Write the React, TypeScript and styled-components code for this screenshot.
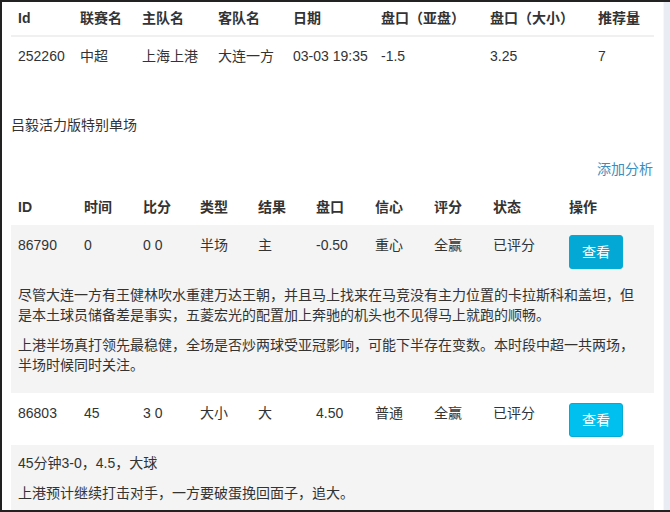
import React from 'react';
import styled, { createGlobalStyle } from 'styled-components';

const GlobalStyle = createGlobalStyle`
  *, *::before, *::after {
    box-sizing: border-box;
  }
  html, body {
    margin: 0;
    padding: 0;
    background: #fff;
  }
  body {
    font-family: "Liberation Sans", "Noto Sans CJK SC", sans-serif;
    font-size: 14px;
    line-height: 20px;
    color: #333;
  }
`;

const Frame = styled.div`
  display: flex;
  height: 100vh;
  border-top: 2px solid #222;
  border-bottom: 2px solid #222;
  border-left: 2px solid #222;
  overflow: hidden;
`;

const Content = styled.div`
  flex: 1;
  min-width: 0;
  padding: 0 9px;
  overflow: hidden;
`;

const ScrollTrack = styled.div`
  width: 7px;
  flex-shrink: 0;
  background: #e9ecf3;
  border-left: 1px solid #f6f7fa;
`;

const Table = styled.table`
  width: 100%;
  table-layout: fixed;
  border-collapse: collapse;
  border-spacing: 0;
`;

const Th = styled.th<{ $w: number; $pad?: string; $line?: boolean }>`
  width: ${({ $w }) => $w}px;
  text-align: left;
  font-weight: bold;
  padding: ${({ $pad }) => $pad || '8px 7px'};
  border-bottom: ${({ $line }) => ($line ? '2px solid #f0f0f0' : 'none')};
  white-space: nowrap;
`;

const Td = styled.td<{ $pad?: string }>`
  padding: ${({ $pad }) => $pad || '10px 7px 8px'};
  vertical-align: top;
  white-space: nowrap;
`;

const Row = styled.tr<{ $grey?: boolean }>`
  background: ${({ $grey }) => ($grey ? '#f4f4f4' : '#fff')};
`;

const DetailCell = styled.td`
  padding: 8px 16px 8px 7px;
  p {
    margin: 0 0 10px;
  }
`;

const Title = styled.div`
  margin-top: 40px;
`;

const LinkRow = styled.div`
  display: flex;
  justify-content: flex-end;
  margin-top: 24px;
  margin-bottom: 10px;
  padding-right: 1px;
`;

const AddLink = styled.a`
  color: #3c8dbc;
  text-decoration: none;
  cursor: pointer;
`;

const ViewButton = styled.button<{ $active?: boolean }>`
  font-family: "Liberation Sans", "Noto Sans CJK SC", sans-serif;
  font-size: 14px;
  line-height: 20px;
  padding: 6px 12px;
  color: #fff;
  background: ${({ $active }) => ($active ? '#03a9d4' : '#00c0ef')};
  border: 1px solid #00acd6;
  border-radius: 3px;
  cursor: pointer;
`;

const topCols: [string, number][] = [
  ['Id', 62],
  ['联赛名', 62],
  ['主队名', 76],
  ['客队名', 75],
  ['日期', 88],
  ['盘口（亚盘）', 109],
  ['盘口（大小）', 108],
  ['推荐量', 63],
];

const topRow = ['252260', '中超', '上海上港', '大连一方', '03-03 19:35', '-1.5', '3.25', '7'];

const cols: [string, number][] = [
  ['ID', 66],
  ['时间', 59],
  ['比分', 57],
  ['类型', 58],
  ['结果', 58],
  ['盘口', 59],
  ['信心', 59],
  ['评分', 59],
  ['状态', 76],
  ['操作', 92],
];

interface Analysis {
  cells: string[];
  notes: string[];
}

const analyses: Analysis[] = [
  {
    cells: ['86790', '0', '0 0', '半场', '主', '-0.50', '重心', '全赢', '已评分'],
    notes: [
      '尽管大连一方有王健林吹水重建万达王朝，并且马上找来在马竞没有主力位置的卡拉斯科和盖坦，但是本土球员储备差是事实，五菱宏光的配置加上奔驰的机头也不见得马上就跑的顺畅。',
      '上港半场真打领先最稳健，全场是否炒两球受亚冠影响，可能下半存在变数。本时段中超一共两场，半场时候同时关注。',
    ],
  },
  {
    cells: ['86803', '45', '3 0', '大小', '大', '4.50', '普通', '全赢', '已评分'],
    notes: ['45分钟3-0，4.5，大球', '上港预计继续打击对手，一方要破蛋挽回面子，追大。'],
  },
];

export default function App() {
  return (
    <>
      <GlobalStyle />
      <Frame>
        <Content>
          <Table>
            <thead>
              <tr>
                {topCols.map(([label, w]) => (
                  <Th key={label} $w={w} $pad="6px 7px 7px" $line>
                    {label}
                  </Th>
                ))}
              </tr>
            </thead>
            <tbody>
              <tr>
                {topRow.map((v, i) => (
                  <Td key={i} $pad="9px 7px">
                    {v}
                  </Td>
                ))}
              </tr>
            </tbody>
          </Table>

          <Title>吕毅活力版特别单场</Title>
          <LinkRow>
            <AddLink>添加分析</AddLink>
          </LinkRow>

          <Table>
            <thead>
              <tr>
                {cols.map(([label, w]) => (
                  <Th key={label} $w={w}>
                    {label}
                  </Th>
                ))}
              </tr>
            </thead>
            <tbody>
              {analyses.map((a, idx) => (
                <React.Fragment key={a.cells[0]}>
                  <Row $grey={idx % 2 === 0}>
                    {a.cells.map((c, i) => (
                      <Td key={i}>{c}</Td>
                    ))}
                    <Td>
                      <ViewButton $active={idx === 0}>查看</ViewButton>
                    </Td>
                  </Row>
                  <Row $grey>
                    <DetailCell colSpan={10}>
                      {a.notes.map((n, i) => (
                        <p key={i}>{n}</p>
                      ))}
                    </DetailCell>
                  </Row>
                </React.Fragment>
              ))}
            </tbody>
          </Table>
        </Content>
        <ScrollTrack />
      </Frame>
    </>
  );
}
